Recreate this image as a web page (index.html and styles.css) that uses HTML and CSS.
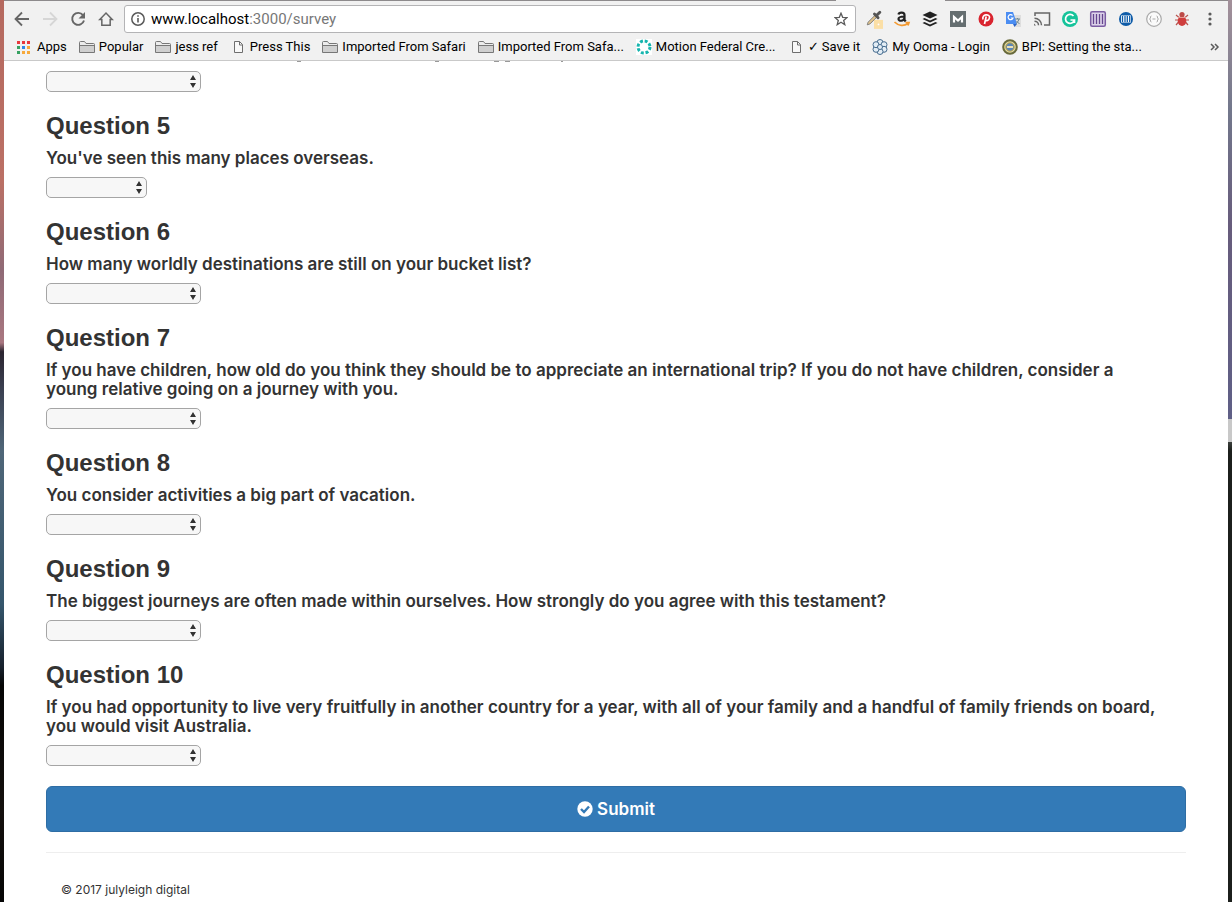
FILE: index.html
```html
<!DOCTYPE html>
<html lang="en">
<head>
<meta charset="utf-8">
<title>Survey</title>
<link rel="stylesheet" href="styles.css">
</head>
<body>
<svg class="defs" aria-hidden="true">
  <symbol id="folder" viewBox="0 0 16 14"><path d="M.5 12.500V2.500q0-1 1-1h4l1.500 2h7.500q1 0 1 1v8z" fill="#ececec" stroke="#777"/><path d="M1 6h14v6H1z" fill="#cfcfcf"/><path d="M1 5.500h14" stroke="#777"/></symbol>
  <symbol id="page" viewBox="0 0 16 12"><path d="M4.500.5h5l3 3v8h-8z" fill="#f8f8f8" stroke="#6e6e6e"/><path d="M9.500.5V4h3" fill="none" stroke="#6e6e6e"/></symbol>
</svg>
<div class="desktop">
<div class="edge edge-left"></div>
<div class="window">
  <header class="chrome">
    <div class="tabs"><span class="tab"></span></div>
    <div class="toolbar">
      <nav class="nav">
        <button class="icon-button" aria-label="Back"><svg width="16" height="16" viewBox="0 0 16 16"><path d="M15 8H2M8 1.500 1.500 8 8 14.500" fill="none" stroke="#666" stroke-width="1.800"/></svg></button>
        <button class="icon-button" aria-label="Forward"><svg width="16" height="16" viewBox="0 0 16 16"><path d="M1 8h13M8 1.500 14.500 8 8 14.500" fill="none" stroke="#d6d6d6" stroke-width="1.800"/></svg></button>
        <button class="icon-button" aria-label="Reload"><svg width="16" height="16" viewBox="0 0 16 16"><path d="M13 4.200A6 6 0 1 0 14 9.500" fill="none" stroke="#666" stroke-width="1.900"/><path d="M15 1v6.500H8.500z" fill="#666"/></svg></button>
        <button class="icon-button" aria-label="Home"><svg width="18" height="18" viewBox="0 0 18 18"><path d="M2 9.500 9 2.300l7 7.200h-2.300v6.500H4.300V9.500z" fill="none" stroke="#666" stroke-width="1.700"/></svg></button>
      </nav>
      <div class="omnibox">
        <svg width="14" height="14" viewBox="0 0 14 14"><circle cx="7" cy="7" r="6.200" fill="none" stroke="#5a5a5a" stroke-width="1.500"/><path d="M7 6v4.500M7 3.200v1.600" stroke="#5a5a5a" stroke-width="1.600"/></svg>
        <span class="url">www.localhost<span class="path">:3000/survey</span></span>
        <button class="icon-button" aria-label="Bookmark this page"><svg width="14" height="14" viewBox="0 0 14 14"><path d="M7 1.200 8.700 5.300 13 5.600 9.700 8.400 10.800 12.700 7 10.300 3.200 12.700 4.300 8.400 1 5.600 5.300 5.300z" fill="none" stroke="#5a5a5a" stroke-width="1.300"/></svg></button>
      </div>
      <div class="extensions">
        <button class="icon-button" aria-label="Color picker"><svg width="20" height="22" viewBox="0 0 20 22"><path d="m2.500 17.500 1-3L11 7l2 2-7.500 7.500z" fill="#e3c48a" stroke="#777"/><path d="m10.500 5.500 4 4M12.500 7.500l4-4" stroke="#555" stroke-width="3.200" stroke-linecap="round"/><path d="M10 12h10v10H10z" fill="#fbdfa6"/><circle cx="15" cy="17" r="1" fill="#fff"/></svg></button>
        <button class="icon-button" aria-label="Amazon"><svg width="18" height="18" viewBox="0 0 18 18"><path d="M5.500 4.500C6 2 11.500 2 11.500 5v5l1.200 1.500M11.500 6.500C7 6.500 5.500 7.500 5.500 9c0 2.500 5 2.500 6-1" fill="none" stroke="#222" stroke-width="2.200"/><path d="M1.500 12c4 4 9.500 4.500 13.500 1.500M12.500 12.500h3.500l-1 3" fill="none" stroke="#f39a32" stroke-width="1.700"/></svg></button>
        <button class="icon-button" aria-label="Buffer"><svg width="18" height="18" viewBox="0 0 18 18"><path d="m9 1.500 7.500 3.500L9 8.500 1.500 5zM1.500 9l2-1L9 10.500 14.500 8l2 1L9 12.500zM1.500 13l2-1L9 14.500l5.500-2.500 2 1L9 16.500z" fill="#222"/></svg></button>
        <button class="icon-button" aria-label="Mail"><svg width="18" height="18" viewBox="0 0 18 18"><path d="M1 1h16v16H1z" fill="#656e70"/><path d="M5 12.500V7l4 3.500L13 7v5.500" fill="none" stroke="#fff" stroke-width="2.200"/></svg></button>
        <button class="icon-button" aria-label="Pinterest"><svg width="18" height="18" viewBox="0 0 18 18"><circle cx="9" cy="9" r="7.500" fill="#d9242f"/><path d="M6 9.500C4.500 4 13 3.500 12.500 7.500c-.4 3.500-3.500 4-4 2M9.200 6.500 7.500 14" fill="none" stroke="#fff" stroke-width="1.700"/></svg></button>
        <button class="icon-button" aria-label="Translate"><svg width="18" height="18" viewBox="0 0 18 18"><path d="M8 5h8v12h-6z" fill="#dedede"/><path d="M1 2h7l4 12H1z" fill="#4b8df2"/><path d="M8 14h4l-2.500 3z" fill="#2c63c5"/><path d="M7.500 5.500A2.500 2.500 0 1 0 8 8H5.800" fill="none" stroke="#fff" stroke-width="1.200"/><path d="M10 9h5M12.500 8v1M14 9q-.5 3-3 4.500M11.500 11l3 3" stroke="#6f8791" fill="none"/></svg></button>
        <button class="icon-button" aria-label="Cast"><svg width="18" height="18" viewBox="0 0 18 18"><path d="M2 6V3h14.500v12H11" fill="none" stroke="#666" stroke-width="1.500"/><path d="M1.500 8.200a7 7 0 0 1 7 7M1.500 11.200a4 4 0 0 1 4 4" fill="none" stroke="#666" stroke-width="1.500"/><path d="M1 13.500 3 15.500H1z" fill="#666"/></svg></button>
        <button class="icon-button" aria-label="Grammarly"><svg width="18" height="18" viewBox="0 0 18 18"><circle cx="9" cy="9" r="8" fill="#15c39a"/><path d="M12.500 6A4.500 4.500 0 1 0 13 11M9.500 10H13.500v3" fill="none" stroke="#fff" stroke-width="1.700"/></svg></button>
        <button class="icon-button" aria-label="Barcode"><svg width="18" height="18" viewBox="0 0 18 18"><rect x="1.700" y="1.700" width="14.600" height="14.600" rx="1.500" fill="#ddd3ea" stroke="#7b5ca3" stroke-width="1.500"/><path d="M4.500 4v10M7.500 4v10M10.500 4v10M13.500 4v10" stroke="#65468f" stroke-width="1.300"/></svg></button>
        <button class="icon-button" aria-label="Library"><svg width="18" height="18" viewBox="0 0 18 18"><circle cx="9" cy="9" r="7" fill="#0d5ba8"/><path d="M4 5.500h10v7H4z" fill="#fff"/><path d="M5.500 6v6M8 6v6M10.300 6v6M12.700 6v6" stroke="#0d5ba8" stroke-width="1.300"/></svg></button>
        <button class="icon-button" aria-label="JSON viewer"><svg width="18" height="18" viewBox="0 0 18 18"><circle cx="9" cy="9" r="7.300" fill="#fafafa" stroke="#aaa" stroke-width="1.200"/><path d="M6.500 6Q5 6 5.500 8L4.500 9l1 1Q5 12 6.500 12M11.500 6Q13 6 12.500 8l1 1-1 1q.5 2-1 2M7.500 9h3" fill="none" stroke="#aaa"/></svg></button>
        <button class="icon-button" aria-label="Bug"><svg width="18" height="18" viewBox="0 0 18 18"><path d="M3 5l3 2.500M15 5l-3 2.500M2 10h14M3 15l3-3.500M15 15l-3-3.500" stroke="#b9544f" stroke-width="1.200"/><ellipse cx="9" cy="11" rx="4.300" ry="5" fill="#cf3d3d"/><circle cx="9" cy="4.500" r="2.600" fill="#bd4a47"/><path d="M5 7.500h8" stroke="#e59a94"/></svg></button>
        <button class="icon-button" aria-label="Menu"><svg width="18" height="18" viewBox="0 0 18 18" fill="#5a5a5a"><circle cx="9" cy="4" r="1.600"/><circle cx="9" cy="9" r="1.600"/><circle cx="9" cy="14" r="1.600"/></svg></button>
      </div>
    </div>
    <nav class="bookmarks">
      <a href="#" class="bookmark"><svg width="16" height="14" viewBox="0 0 16 14"><path d="M0 1h3v3H0zM5 1h3v3H5zM10 1h3v3h-3z" fill="#e8383d"/><path d="M0 6h3v3H0zM0 11h3v3H0z" fill="#36a161"/><path d="M5 6h3v3H5z" fill="#2f87e8"/><path d="M10 6h3v3h-3zM5 11h3v3H5zM10 11h3v3h-3z" fill="#f7a93b"/></svg>Apps</a>
      <a href="#" class="bookmark"><svg width="16" height="14"><use href="#folder"/></svg>Popular</a>
      <a href="#" class="bookmark"><svg width="16" height="14"><use href="#folder"/></svg>jess ref</a>
      <a href="#" class="bookmark"><svg width="16" height="12"><use href="#page"/></svg>Press This</a>
      <a href="#" class="bookmark"><svg width="16" height="14"><use href="#folder"/></svg>Imported From Safari</a>
      <a href="#" class="bookmark"><svg width="16" height="14"><use href="#folder"/></svg>Imported From Safa...</a>
      <a href="#" class="bookmark"><svg width="16" height="16" viewBox="0 0 16 16"><path d="M0 0h16v16H0z" fill="#fff"/><circle cx="8" cy="8" r="6" fill="none" stroke="#16b5ae" stroke-width="3" stroke-dasharray="2.900 1.812"/></svg>Motion Federal Cre...</a>
      <a href="#" class="bookmark"><svg width="16" height="12"><use href="#page"/></svg><span>✓ Save it</span></a>
      <a href="#" class="bookmark"><svg width="16" height="16" viewBox="0 0 16 16" fill="#e3edf5" stroke="#466c8f"><circle cx="8" cy="3.500" r="3"/><circle cx="12" cy="5.700" r="3"/><circle cx="12" cy="10.300" r="3"/><circle cx="8" cy="12.500" r="3"/><circle cx="4" cy="10.300" r="3"/><circle cx="4" cy="5.700" r="3"/><circle cx="8" cy="8" r="2.500"/></svg>My Ooma - Login</a>
      <a href="#" class="bookmark"><svg width="16" height="16" viewBox="0 0 16 16"><circle cx="8" cy="8" r="6.800" fill="#ddd9a8" stroke="#696a3b" stroke-width="2"/><circle cx="8" cy="8" r="4.200" fill="#5b86b5" stroke="#c6a742"/><path d="M5 8h6" stroke="#e8e0b8" stroke-width="2"/></svg>BPI: Setting the sta...</a>
      <button class="more" aria-label="More bookmarks"><svg width="10" height="8" viewBox="0 0 10 8"><path d="m1 1 3 3-3 3M5 1l3 3-3 3" fill="none" stroke="#5a5a5a" stroke-width="1.500"/></svg></button>
    </nav>
  </header>
  <main class="page">
    <svg class="overflow-tail" width="600" height="1" aria-hidden="true"><path d="M251 .5h4M389 .5h4M448 .5h5M459 .5h5M515 .5h2" stroke="#999"/></svg>
    <form class="survey">
      <section class="question"><select aria-label="Question 4"><option></option></select></section>
      <section class="question"><h3>Question 5</h3><label for="q5">You've seen this many places overseas.</label><select id="q5" class="short"><option></option></select></section>
      <section class="question"><h3>Question 6</h3><label for="q6">How many worldly destinations are still on your bucket list?</label><select id="q6"><option></option></select></section>
      <section class="question"><h3>Question 7</h3><label for="q7">If you have children, how old do you think they should be to appreciate an international trip? If you do not have children, consider a young relative going on a journey with you.</label><select id="q7"><option></option></select></section>
      <section class="question"><h3>Question 8</h3><label for="q8">You consider activities a big part of vacation.</label><select id="q8"><option></option></select></section>
      <section class="question"><h3>Question 9</h3><label for="q9">The biggest journeys are often made within ourselves. How strongly do you agree with this testament?</label><select id="q9"><option></option></select></section>
      <section class="question"><h3>Question 10</h3><label for="q10">If you had opportunity to live very fruitfully in another country for a year, with all of your family and a handful of family friends on board, you would visit Australia.</label><select id="q10"><option></option></select></section>
      <button type="button" class="submit"><svg width="16" height="16" viewBox="0 0 16 16"><circle cx="8" cy="8" r="7.700" fill="#fff"/><path d="m4 8 3 3 5-5.500" fill="none" stroke="#337ab7" stroke-width="2.400"/></svg>Submit</button>
    </form>
    <footer>© 2017 julyleigh digital</footer>
  </main>
</div>
<div class="edge edge-right"></div>
</div>
</body>
</html>
```
FILE: styles.css
```css
* { box-sizing: border-box; }
body { margin: 0; background: #fff; color: #333; font-family: "Liberation Sans", Arial, sans-serif; }
.defs { position: absolute; width: 0; height: 0; }
.desktop { display: flex; height: 100vh; }
.edge { flex: 0 0 4px; }
.edge-left { background: linear-gradient(#b5695f, #bb7065 20%, #8f6a76 30%, #a97780 38%, #2b2530 39%, #3a3f50 43%, #4f6678 50%, #35566c 67%, #16202c 74%, #050505 76%, #14100d 90%, #050505); }
.edge-right { background: linear-gradient(#a3909a, #73788c 12%, #675c7c 25%, #5f5f86 46.500%, #c8c8c8 46.500%, #c8c8c8 49%, #3b403c 49%, #1c1f1c 50%, #1c1f1c); }
.window { flex: 1; min-width: 0; display: flex; flex-direction: column; overflow: hidden; }
.chrome { background: #f1f1f1; border-bottom: 1px solid #c9c9c9; font-family: Roboto, sans-serif; color: #000; }
.tabs { display: flex; justify-content: flex-end; height: 1px; background: #8d8a8c; padding-right: 283px; }
.tab { width: 109px; background: #f1f1f1; }
.toolbar { display: flex; align-items: center; height: 36px; padding: 0 9px; }
.icon-button, .more { display: flex; align-items: center; justify-content: center; padding: 0; border: 0; background: none; }
.nav { display: flex; gap: 12px; width: 111px; padding-left: 1px; }
.nav .icon-button { width: 16px; flex: none; }
.omnibox { flex: 1; display: flex; align-items: center; gap: 6px; height: 28px; padding: 0 7px 0 6px; background: #fff; border: 1px solid #b4b4b6; border-radius: 3px; font-size: 15px; }
.url { flex: 1; }
.path { color: #777; }
.extensions { display: flex; gap: 10px; margin-left: 9px; }
.extensions .icon-button { width: 18px; height: 20px; }
.bookmarks { display: flex; align-items: center; gap: 12px; height: 23px; padding: 0 8px 4px 13px; font-size: 13px; }
.bookmark { display: flex; align-items: center; gap: 4px; color: #000; text-decoration: none; white-space: nowrap; }
.bookmark svg { flex: none; }
.more { margin-left: auto; }
.page { flex: 1; overflow: hidden; padding: 0 42px; }
.overflow-tail { display: block; }
.survey { padding-top: 9px; }
.question { padding-bottom: 20px; }
h3 { margin: 0 0 10px; padding-top: 1px; font-size: 24px; line-height: 26px; }
label { display: block; margin-bottom: 9px; padding-right: 24px; font-family: Inter, sans-serif; font-size: 17px; font-weight: 600; line-height: 19px; }
select { display: block; width: 155px; height: 21px; appearance: none; border: 1px solid #a5a5a5; border-radius: 5px; background: #f7f7f7 url("data:image/svg+xml,%3Csvg xmlns='http://www.w3.org/2000/svg' width='6' height='13'%3E%3Cpath d='M3 0l3 5H0zM3 13l3-5H0z' fill='%23333'/%3E%3C/svg%3E") no-repeat right 4px center; }
.short { width: 101px; }
.submit { display: flex; align-items: center; justify-content: center; gap: 4px; width: 100%; height: 46px; border: 1px solid #2e6da4; border-radius: 6px; background: #337ab7; color: #fff; font: 600 17px Inter, sans-serif; }
footer { margin-top: 20px; padding: 30px 15px 0; border-top: 1px solid #eee; font: 12px/14px Inter, sans-serif; }
```
